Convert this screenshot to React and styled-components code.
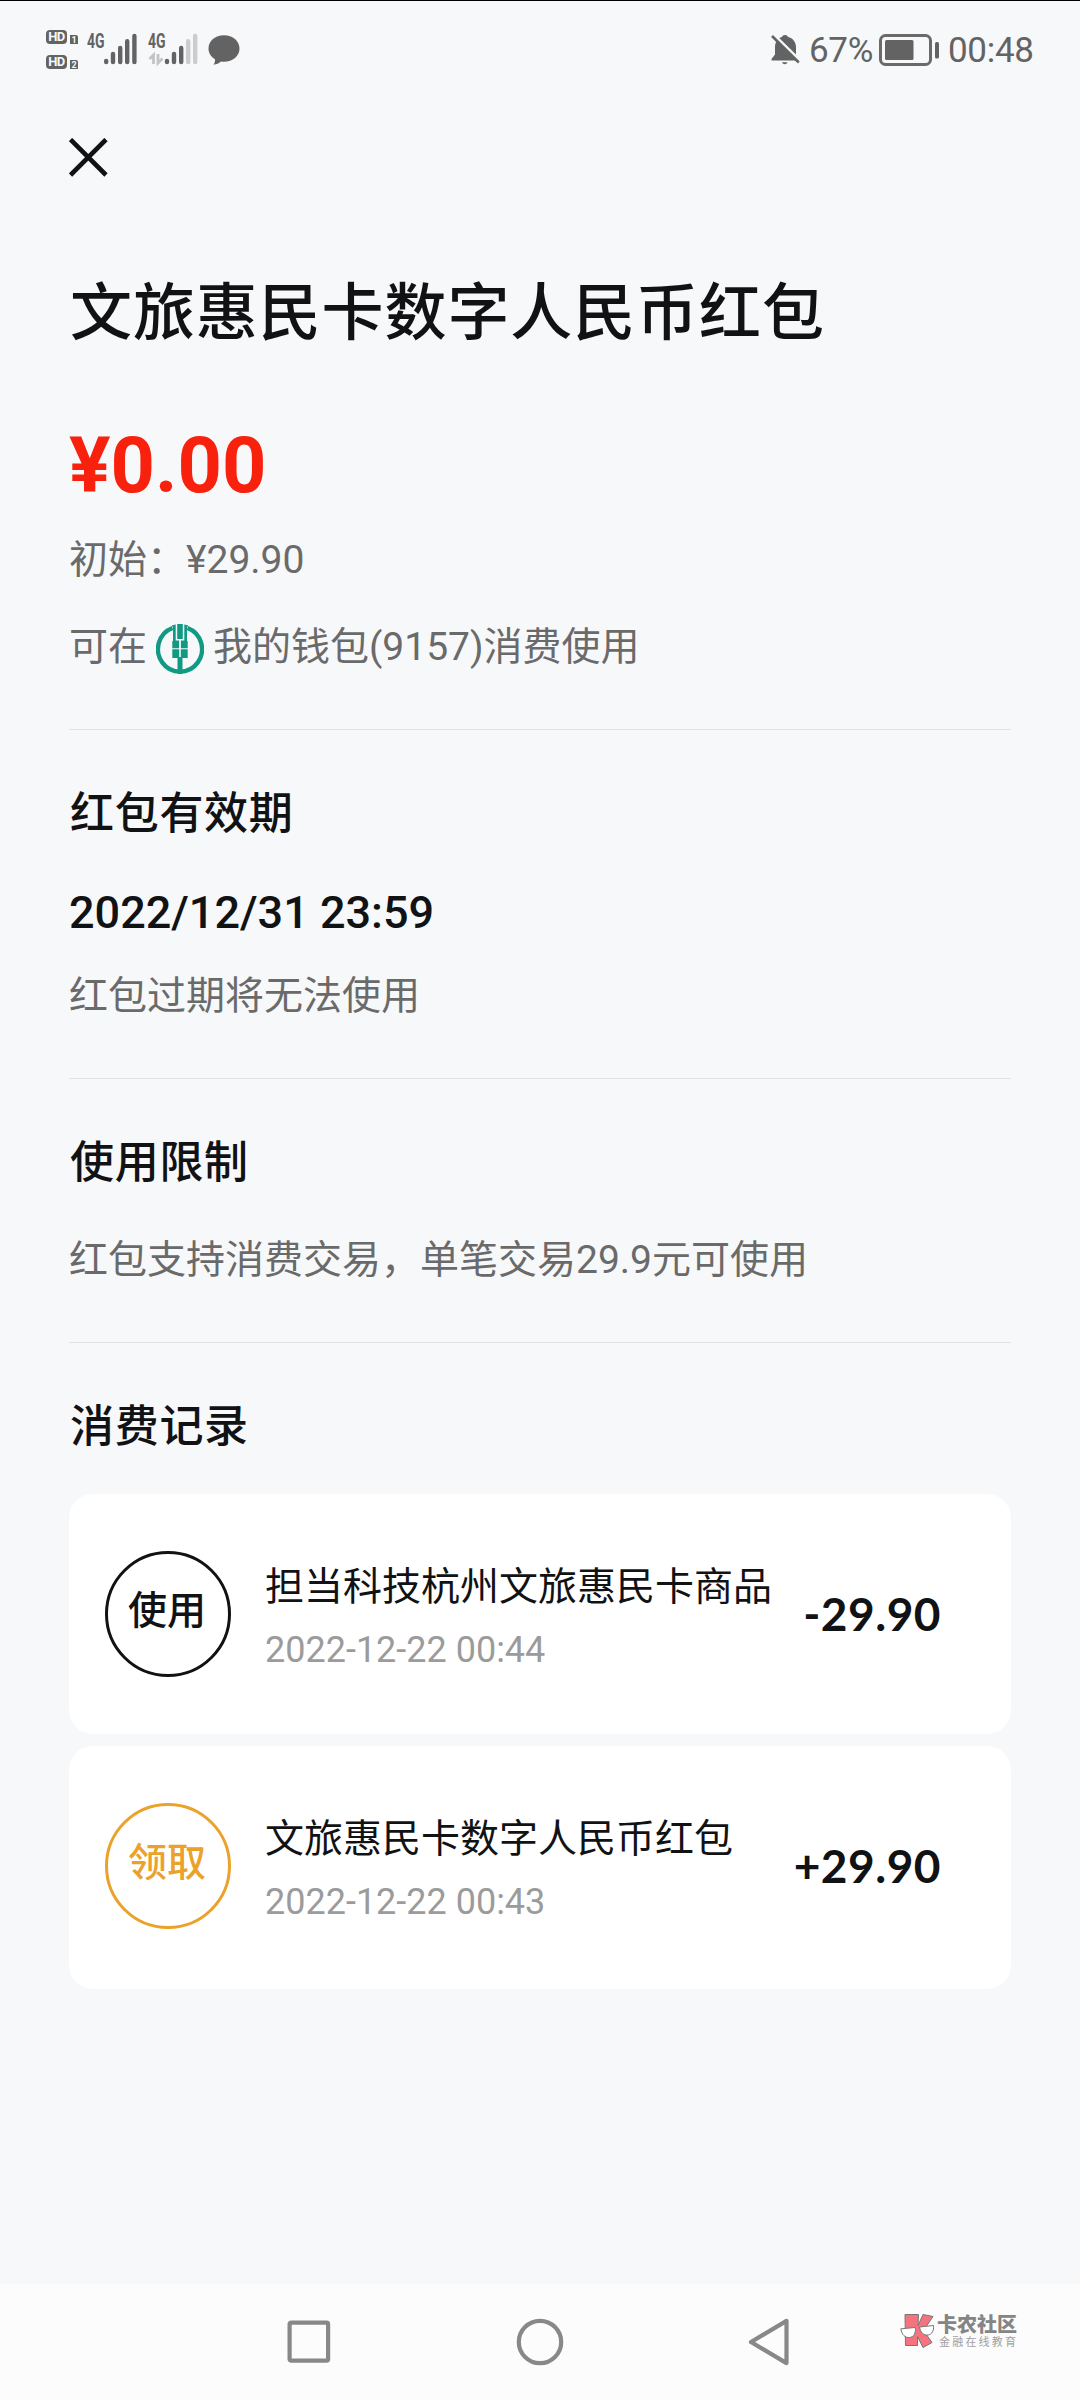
import React from 'react'
import styled, { createGlobalStyle } from 'styled-components'

const records = [
  {
    id: 1,
    tag: '使用',
    color: '#111214',
    title: '担当科技杭州文旅惠民卡商品',
    time: '2022-12-22 00:44',
    amount: '-29.90',
  },
  {
    id: 2,
    tag: '领取',
    color: '#eba22b',
    title: '文旅惠民卡数字人民币红包',
    time: '2022-12-22 00:43',
    amount: '+29.90',
  },
]

const HdBadge = ({ sim }) => (
  <HdRow>
    <HdBox>HD</HdBox>
    <SimBox>{sim}</SimBox>
  </HdRow>
)

const SignalFull = () => (
  <svg width="50" height="36" viewBox="0 0 50 36">
    <g stroke="#636363" strokeWidth="4.4" strokeLinecap="round">
      <path d="M19.2 31v1M26 24v8M33.2 18v14M40.2 11.3v20.7M47.4 6v26" />
    </g>
    <SignalLabel x="0" y="17.5">4G</SignalLabel>
  </svg>
)

const SignalWeak = () => (
  <svg width="50" height="36" viewBox="0 0 50 36">
    <g strokeWidth="4.4" strokeLinecap="round">
      <path stroke="#636363" d="M19 31v1M26 24v8M33.2 18v14" />
      <path stroke="#cbccce" d="M40.2 11.3v20.7M47.2 6v26" />
    </g>
    <path d="M5.5 34v-9l-4 4M10 24v9l4.5-4.5" fill="none" stroke="#c3c4c6" strokeWidth="2.8" />
    <SignalLabel x="0" y="17.5">4G</SignalLabel>
  </svg>
)

const ChatIcon = () => (
  <svg width="32" height="31" viewBox="0 0 32 31">
    <path
      d="M16 .3C24.8.3 31.5 6 31.5 13.600S24.800 26.800 16 26.800c-1 0-2-.1-3-.2-2 1.700-4.500 3-7.500 3.200 1.200-1.700 1.700-3.500 1.500-5.500C3 22.100.5 18.300.5 13.600.5 6 7.200.3 16 .3z"
      fill="#636363"
    />
  </svg>
)

const BellOffIcon = () => (
  <svg width="30" height="32" viewBox="0 0 30 32">
    <path
      d="M15 1c1.600 0 2.600.9 2.800 1.700C23 4 26 8.400 26 13v8l3 4.500v1H1.500v-1.500L5 20.500V13c0-4.600 2.700-8.900 7.200-10.300C12.400 1.900 13.400 1 15 1z"
      fill="#636363"
    />
    <path d="M12 28.300h5.500c-.5 1.300-1.400 1.900-2.700 1.900s-2.300-.6-2.800-1.900z" fill="#636363" />
    <path d="M3.500.5L31 27.500" stroke="#f7f8fa" strokeWidth="3" />
    <path d="M2 2L28.800 28.500" stroke="#636363" strokeWidth="2.6" />
  </svg>
)

const BatteryIcon = () => (
  <svg width="60" height="33" viewBox="0 0 60 33">
    <rect x="1.500" y="1.500" width="50" height="29" rx="5" fill="none" stroke="#6a6a6a" strokeWidth="3" />
    <rect x="6" y="6" width="28.500" height="20" rx="1.500" fill="#636363" />
    <rect x="56" y="8" width="4" height="16.500" rx="1.500" fill="#636363" />
  </svg>
)

const CloseIcon = () => (
  <svg width="39" height="39" viewBox="0 0 39 39">
    <path d="M1.500 1.500L37 37M37 1.500L1.500 37" stroke="#111214" strokeWidth="4.600" />
  </svg>
)

// wheat-ear mark inside an open ring
const BankLogo = () => (
  <svg width="48" height="52" viewBox="0 0 48 52">
    <path
      d="M16.500 4A22 22.500 0 1 0 31.500 4"
      fill="none"
      stroke="#109a83"
      strokeWidth="4.400"
    />
    <g fill="#109a83">
      <path d="M21.200 0h5.600v15h-5.600z" />
      <path d="M16 1.200l3.700-.8v16h3.400v7.800h-6.800v-7.200h.7v-13z" />
      <path d="M32 1.200l-3.700-.8v16h-3.400v7.800h6.800v-7.200h-.7v-13z" />
      <path d="M16.300 25.300h6.900v8.700h-6.900zM24.800 25.300h6.900v8.700h-6.900z" />
      <path d="M21.500 33h5v17h-5z" />
    </g>
  </svg>
)

const CommunityLogo = () => (
  <svg width="35" height="36" viewBox="0 0 35 36">
    <g stroke="#7b7476" strokeWidth="1">
      <path d="M5 1.500h13.500l-.5 11L23 1.500l10 2-9.500 14L32 29.500l-9 5-5.500-11v9H5.500z" fill="#f3747f" />
      <path d="M.8 15.800l14.500-1.300c.8 5.500-1.500 9.700-5.800 10-4.500.3-7.500-2.500-8.700-8.700z" fill="#fff" />
      <path d="M19.500 14l14-1.500c.6 5-1.500 9-5.500 9.500-4.300.5-7.500-2.300-8.500-8z" fill="#fff" />
    </g>
  </svg>
)

const App = () => {
  return (
    <>
      <GlobalStyle />
      <Screen>
        <StatusBar>
          <StatusLeft>
            <HdStack>
              <HdBadge sim="1" />
              <HdBadge sim="2" />
            </HdStack>
            <SignalFull />
            <SignalWeak />
            <ChatIcon />
          </StatusLeft>
          <StatusRight>
            <BellOffIcon />
            <StatusText $width={63}>67%</StatusText>
            <BatteryIcon />
            <StatusText $width={85}>00:48</StatusText>
          </StatusRight>
        </StatusBar>

        <Content>
          <CloseButton aria-label="关闭">
            <CloseIcon />
          </CloseButton>
          <Title>文旅惠民卡数字人民币红包</Title>
          <Balance>¥0.00</Balance>
          <Note $top={21}>初始：¥29.90</Note>
          <WalletRow>
            <span>可在</span>
            <BankLogo />
            <span>我的钱包(9157)消费使用</span>
          </WalletRow>

          <Section>
            <SectionTitle>红包有效期</SectionTitle>
            <Expiry>2022/12/31 23:59</Expiry>
            <Note $top={27}>红包过期将无法使用</Note>
          </Section>

          <Section>
            <SectionTitle>使用限制</SectionTitle>
            <Note $top={39}>红包支持消费交易，单笔交易29.9元可使用</Note>
          </Section>

          <Section>
            <SectionTitle>消费记录</SectionTitle>
            <RecordList>
              {records.map((item) => (
                <RecordCard key={item.id}>
                  <RecordTag $color={item.color}>{item.tag}</RecordTag>
                  <RecordInfo>
                    <RecordTitle>{item.title}</RecordTitle>
                    <RecordTime>{item.time}</RecordTime>
                  </RecordInfo>
                  <RecordAmount>{item.amount}</RecordAmount>
                </RecordCard>
              ))}
            </RecordList>
          </Section>
        </Content>

        <NavBar>
          <svg width="48" height="48" viewBox="0 0 48 48">
            <rect x="4.600" y="4.600" width="38.500" height="38" rx="1.500" fill="none" stroke="#888" strokeWidth="4.200" />
          </svg>
          <svg width="48" height="48" viewBox="0 0 48 48">
            <circle cx="24" cy="24" r="21.200" fill="none" stroke="#888" strokeWidth="4.200" />
          </svg>
          <svg width="48" height="48" viewBox="0 0 48 48">
            <path d="M39.500 2.900V45.100L4 24z" fill="none" stroke="#888" strokeWidth="4.200" strokeLinejoin="round" />
          </svg>
          <Watermark>
            <CommunityLogo />
            <WatermarkText>
              <WatermarkName>卡农社区</WatermarkName>
              <WatermarkSlogan>金融在线教育</WatermarkSlogan>
            </WatermarkText>
          </Watermark>
        </NavBar>
      </Screen>
    </>
  )
}

const GlobalStyle = createGlobalStyle`
  * {
    box-sizing: border-box;
  }

  body {
    margin: 0;
    background: #f7f8fa;
    font-family: Roboto, "Noto Sans CJK SC", sans-serif;
    color: #111214;
  }

  svg {
    display: block;
    flex: none;
  }
`

const Screen = styled.div`
  display: flex;
  flex-direction: column;
  width: 1080px;
  height: 2400px;
  background: #f7f8fa;
  border-top: 1px solid #000;
`

const StatusBar = styled.header`
  display: flex;
  justify-content: space-between;
  height: 99px;
  padding: 0 47px 0 46px;
`

const StatusLeft = styled.div`
  display: flex;
  align-items: flex-start;
  padding-top: 29px;

  svg:nth-of-type(1) {
    margin: 0 11px 0 9px;
  }

  svg:nth-of-type(3) {
    margin: 5px 0 0 10px;
  }
`

const HdStack = styled.div`
  display: flex;
  flex-direction: column;
  gap: 11px;
`

const HdRow = styled.div`
  display: flex;
  align-items: flex-end;
  gap: 3px;
`

const HdBox = styled.span`
  width: 21px;
  height: 14px;
  border-radius: 4px;
  background: #636363;
  font-size: 13px;
  font-weight: 700;
  line-height: 14px;
  letter-spacing: -0.5px;
  text-align: center;
  color: #f7f8fa;
`

const SimBox = styled.span`
  width: 8px;
  height: 9px;
  border-radius: 0 2px 0 0;
  background: #636363;
  font-size: 9px;
  font-weight: 700;
  line-height: 10px;
  text-align: center;
  color: #f7f8fa;
`

const SignalLabel = styled.text`
  font-family: Roboto, sans-serif;
  font-size: 20px;
  font-weight: 700;
  fill: #636363;
  transform: scaleX(0.7);
`

const StatusRight = styled.div`
  display: flex;
  align-items: flex-start;
  padding-top: 33px;

  svg:nth-of-type(1) {
    margin-right: 9px;
  }

  svg:nth-of-type(2) {
    margin: 0 9px 0 7px;
  }
`

const StatusText = styled.span`
  width: ${({ $width }) => $width}px;
  font-size: 35px;
  line-height: 34px;
  letter-spacing: -0.3px;
  color: #636363;
  white-space: nowrap;
`

const Content = styled.main`
  flex: 1;
  padding: 38px 69px 0;
`

const CloseButton = styled.button`
  display: block;
  padding: 0;
  border: 0;
  background: none;
`

const Title = styled.h1`
  margin: 97px 0 0;
  padding-left: 1px;
  font-size: 62px;
  font-weight: 500;
  line-height: 80px;
  letter-spacing: 0.9px;
`

const Balance = styled.div`
  margin-top: 67px;
  font-size: 77.5px;
  font-weight: 700;
  line-height: 90px;
  color: #f8210d;
`

const Note = styled.p`
  margin: ${({ $top }) => $top}px 0 0;
  font-size: 39px;
  line-height: 56px;
  color: #6a6a6a;
`

const WalletRow = styled.div`
  display: flex;
  align-items: center;
  margin-top: 31px;
  margin-bottom: 54px;
  height: 56px;
  font-size: 39px;
  line-height: 56px;
  color: #6a6a6a;

  svg {
    margin: 5px 9px 0;
  }
`

const Section = styled.section`
  padding: 54px 0;
  border-top: 1px solid #e2e3e6;
`

const SectionTitle = styled.h2`
  margin: 0;
  padding-left: 1px;
  font-size: 44px;
  font-weight: 500;
  line-height: 60px;
  letter-spacing: 0.7px;
`

const Expiry = styled.div`
  margin-top: 41px;
  font-size: 45px;
  font-weight: 500;
  line-height: 56px;
`

const RecordList = styled.div`
  display: flex;
  flex-direction: column;
  gap: 12px;
  margin-top: 37px;
`

const RecordCard = styled.div`
  display: flex;
  align-items: flex-start;
  padding: 57px 70px 57px 36px;
  background: #fff;
  border-radius: 24px;

  &:last-child {
    padding-bottom: 60px;
  }
`

const RecordTag = styled.div`
  flex: none;
  width: 126px;
  height: 126px;
  padding-right: 2px;
  border: 3px solid ${({ $color }) => $color};
  border-radius: 50%;
  font-size: 39px;
  font-weight: 500;
  line-height: 114px;
  text-align: center;
  color: ${({ $color }) => $color};
`

const RecordInfo = styled.div`
  flex: 1;
  padding: 8px 0 0 34px;
  white-space: nowrap;
`

const RecordTitle = styled.div`
  font-size: 39px;
  line-height: 56px;
`

const RecordTime = styled.div`
  margin-top: 10px;
  font-size: 36px;
  line-height: 50px;
  color: #9b9b9b;
`

const RecordAmount = styled.div`
  font-family: Lato, sans-serif;
  font-size: 46px;
  font-weight: 700;
  line-height: 126px;
  letter-spacing: 0.5px;
`

const NavBar = styled.nav`
  position: relative;
  display: flex;
  gap: 183px;
  height: 116px;
  padding: 34px 0 0 285px;
  background: #fcfcfc;
`

const Watermark = styled.div`
  position: absolute;
  top: 29px;
  left: 900px;
  display: flex;
  gap: 2px;
`

const WatermarkText = styled.div`
  font-family: "Noto Sans CJK SC", sans-serif;
  white-space: nowrap;
`

const WatermarkName = styled.div`
  font-size: 20px;
  font-weight: 900;
  line-height: 21px;
  color: #858585;
`

const WatermarkSlogan = styled.div`
  padding-left: 2px;
  font-size: 11px;
  line-height: 14px;
  letter-spacing: 2.2px;
  color: #a0a0a0;
`

export default App
